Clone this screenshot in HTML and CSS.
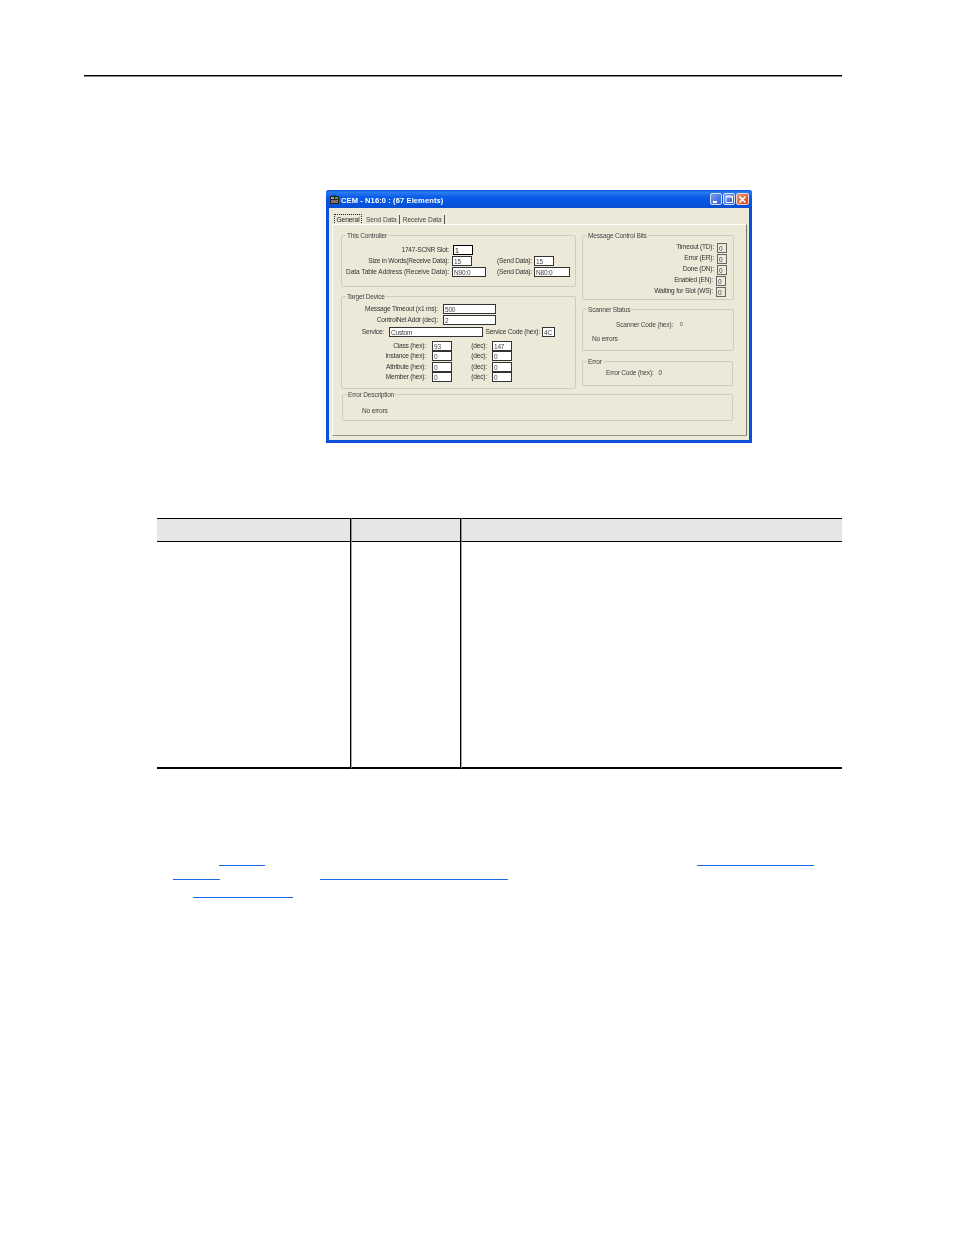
FILE: index.html
```html
<!DOCTYPE html>
<html lang="en">
<head>
<meta charset="utf-8">
<title>CEM - N16:0</title>
<link rel="stylesheet" href="styles.css">
</head>
<body>
<div class="rule"></div>

<section class="dialog">
  <header class="titlebar">
    <svg class="app-icon" viewBox="0 0 9 9" width="9" height="9"><rect x="0" y="1" width="9" height="8" fill="#262626"/><rect x="1" y="2" width="3" height="2" fill="#8fae98"/><rect x="5" y="2" width="3" height="2" fill="#4f9a62"/><rect x="1" y="5" width="7" height="3" fill="#8a6f60"/><rect x="3" y="0" width="3" height="1" fill="#3c3c3c"/></svg>
    <span class="title">CEM - N16:0 : (67 Elements)</span>
    <div class="win-buttons">
      <span class="win-btn"><svg viewBox="0 0 12 12" width="12" height="12"><rect x="3" y="8" width="4" height="2" fill="#fff"/></svg></span>
      <span class="win-btn"><svg viewBox="0 0 12 12" width="12" height="12"><path d="M3 3h6.500v6.500H3zM3 4h6.500" fill="none" stroke="#fff" stroke-width="1"/></svg></span>
      <span class="win-btn close"><svg viewBox="0 0 13 13" width="13" height="13"><path d="M3.500 3.500l6 6M9.500 3.500l-6 6" fill="none" stroke="#fff" stroke-width="1.700"/></svg></span>
    </div>
  </header>

  <div class="client">
    <nav class="tabs">
      <span class="tab active">General</span>
      <span class="tab send">Send Data</span>
      <span class="tab recv">Receive Data</span>
    </nav>
    <div class="panel">
      <div class="columns">
        <div class="col-left">
          <div class="group controller">
            <span class="legend">This Controller</span>
            <div class="row r11">
              <span class="lbl w107 slot">1747-SCNR Slot:</span><span class="box w20 strong">1</span>
            </div>
            <div class="row r11">
              <span class="lbl w107">Size in Words(Receive Data):</span><span class="box w20">15</span>
              <span class="lbl w37 ml23">(Send Data):</span><span class="box w20">15</span>
            </div>
            <div class="row r11">
              <span class="lbl w107 wide">Data Table Address (Receive Data):</span><span class="box w34">N90:0</span>
              <span class="lbl w37 ml9">(Send Data):</span><span class="box w36">N80:0</span>
            </div>
          </div>

          <div class="group target">
            <span class="legend">Target Device</span>
            <div class="row r11">
              <span class="lbl w96">Message Timeout (x1 ms):</span><span class="box w53 gap5">500</span>
            </div>
            <div class="row r12">
              <span class="lbl w96">ControlNet Addr (dec):</span><span class="box w53 gap5">2</span>
            </div>
            <div class="row r14">
              <span class="lbl w42">Service:</span><span class="box w94 gap5">Custom</span>
              <span class="lbl w55">Service Code (hex):</span><span class="box w13">4C</span>
            </div>
            <div class="row r10">
              <span class="lbl w84">Class (hex):</span><span class="box w20 gap6">93</span>
              <span class="lbl w35">(dec):</span><span class="box w20 gap5">147</span>
            </div>
            <div class="row r11">
              <span class="lbl w84">Instance (hex):</span><span class="box w20 gap6">0</span>
              <span class="lbl w35">(dec):</span><span class="box w20 gap5">0</span>
            </div>
            <div class="row r10">
              <span class="lbl w84">Attribute (hex):</span><span class="box w20 gap6">0</span>
              <span class="lbl w35">(dec):</span><span class="box w20 gap5">0</span>
            </div>
            <div class="row r10">
              <span class="lbl w84">Member (hex):</span><span class="box w20 gap6">0</span>
              <span class="lbl w35">(dec):</span><span class="box w20 gap5">0</span>
            </div>
          </div>
        </div>

        <div class="col-right">
          <div class="group bits">
            <span class="legend">Message Control Bits</span>
            <div class="row bit"><span class="lbl">Timeout (TD):</span><span class="box bitbox">0</span></div>
            <div class="row bit"><span class="lbl">Error (ER):</span><span class="box bitbox">0</span></div>
            <div class="row bit"><span class="lbl">Done (DN):</span><span class="box bitbox">0</span></div>
            <div class="row bit inset"><span class="lbl">Enabled (EN):</span><span class="box bitbox">0</span></div>
            <div class="row bit inset"><span class="lbl">Waiting for Slot (WS):</span><span class="box bitbox">0</span></div>
          </div>

          <div class="group scanner">
            <span class="legend">Scanner Status</span>
            <p class="line scan-code"><span>Scanner Code (hex):</span><span class="val-tiny">0</span></p>
            <p class="line scan-msg">No errors</p>
          </div>

          <div class="group error">
            <span class="legend">Error</span>
            <p class="line err-code"><span>Error Code (hex):</span><span class="val">0</span></p>
          </div>
        </div>
      </div>

      <div class="group description">
        <span class="legend">Error Description</span>
        <p class="line desc-msg">No errors</p>
      </div>
    </div>
  </div>
</section>

<table class="data">
  <thead><tr><th></th><th></th><th></th></tr></thead>
  <tbody><tr><td></td><td></td><td></td></tr></tbody>
</table>

<div class="links">
  <div class="link-row first"><a class="link l1"></a><a class="link l2"></a></div>
  <div class="link-row second"><a class="link l3"></a><a class="link l4"></a></div>
  <div class="link-row third"><a class="link l5"></a></div>
</div>
</body>
</html>
```

FILE: styles.css
```css
html, body { margin: 0; padding: 0; background: #fff; }
body { width: 954px; height: 1235px; overflow: hidden; font-family: "Liberation Sans", sans-serif; }

.rule { margin: 75px 0 0 84px; width: 758px; height: 1px; background: #000; box-shadow: 0 1px 0 rgba(0,0,0,.45); }

/* dialog window */
.dialog { box-sizing: border-box; margin: 114px 0 0 326px; width: 426px; height: 253px; background: #0b4fd8; border-radius: 3px 3px 0 0; padding: 0 3px 3px 3px; display: flex; flex-direction: column; filter: blur(.35px); font-size: 6.600px; letter-spacing: -.2px; color: #333; }
.titlebar { height: 18px; flex: none; margin: 0 -3px; padding: 1px 3px 0 4px; box-sizing: border-box; display: flex; align-items: center; border-radius: 3px 3px 0 0; background: linear-gradient(#0a57e0 0%, #2a7cf2 12%, #0a5ce8 40%, #0653dc 80%, #0a4fd0 100%); }
.app-icon { flex: none; }
.title { margin-left: 2px; margin-top: 1px; color: #fff; font-size: 7.500px; font-weight: bold; letter-spacing: .12px; }
.win-buttons { margin-left: auto; display: flex; gap: 1px; margin-top: -1px; }
.win-btn { box-sizing: border-box; width: 12px; height: 12px; border: 1px solid #d6e0f8; border-radius: 2px; background: linear-gradient(135deg, #7c9cf0, #2d5ddc); display: flex; overflow: hidden; }
.win-btn svg { margin: -1px; }
.win-btn.close { width: 13px; background: linear-gradient(135deg, #ee9a78, #d0401a); border-color: #f2d4c8; }

.client { flex: 1; background: #ece9d8; display: flex; flex-direction: column; padding: 6px 2px 4px 3px; min-height: 0; }
.tabs { display: flex; height: 11px; flex: none; padding-left: 2px; align-items: center; letter-spacing: -.05px; }
.tab { white-space: nowrap; line-height: 10px; color: #444; }
.tab.active { box-sizing: border-box; width: 28px; height: 11px; border: 1px dotted #222; text-align: center; line-height: 9px; color: #222; }
.tab.send { margin-left: 4px; padding-right: 2px; border-right: 1px solid #555; }
.tab.recv { margin-left: 3px; padding-right: 2px; border-right: 1px solid #555; }

.panel { flex: 1; box-sizing: border-box; margin-top: -1px; border: 1px solid; border-color: #fff #77776a #99998a #fff; padding: 10px 12px 0 8px; }
.columns { display: flex; gap: 6px; }
.col-left { width: 235px; display: flex; flex-direction: column; gap: 9px; }
.col-right { width: 152px; display: flex; flex-direction: column; }

.group { box-sizing: border-box; position: relative; border: 1px solid #cfcdbd; border-radius: 2px; }
.legend { position: absolute; top: -5px; left: 4px; padding: 0 1px; background: #ece9d8; line-height: 9px; white-space: nowrap; color: #444; }
.controller { height: 52px; padding-top: 9px; }
.target { height: 93px; padding-top: 7px; }
.bits { height: 65px; padding-top: 7px; }
.scanner { height: 42px; margin-top: 9px; }
.error { height: 25px; margin-top: 10px; width: 151px; }
.description { height: 27px; width: 391px; margin-top: 5px; margin-left: 1px; }

.row { display: flex; align-items: flex-start; white-space: nowrap; }
.r10 { height: 10px; }
.r11 { height: 11px; }
.r12 { height: 12px; }
.r14 { height: 14px; }
.lbl { text-align: right; flex: none; line-height: 9px; }
.wide { letter-spacing: -.05px; }
.box { box-sizing: border-box; height: 10px; flex: none; border: 1px solid #333; background: #fff; font-size: 6.500px; line-height: 9px; padding-left: 1px; color: #444; overflow: hidden; }
.box.strong { border-color: #000; color: #111; font-size: 7px; }
.w107 { width: 107px; margin-right: 3px; }
.slot { margin-right: 4px; }
.w37 { width: 37px; margin-right: 2px; }
.ml23 { margin-left: 23px; }
.ml9 { margin-left: 9px; }
.w20 { width: 20px; }
.w34 { width: 34px; }
.w36 { width: 36px; }
.w96 { width: 96px; }
.w53 { width: 53px; }
.gap5 { margin-left: 5px; }
.gap6 { margin-left: 6px; }
.w42 { width: 42px; }
.w94 { width: 94px; }
.w55 { width: 55px; margin-left: 2px; }
.w13 { width: 13px; margin-left: 2px; }
.w84 { width: 84px; }
.w35 { width: 35px; }

.bit { height: 11px; justify-content: flex-end; padding-right: 6px; }
.bit.inset { padding-right: 7px; }
.bit .lbl { margin-top: -1px; }
.bitbox { width: 10px; margin-left: 3px; border-color: #666; background: #ece9d8; }

.line { margin: 0; white-space: nowrap; line-height: 9px; color: #444; }
.scan-code { padding: 10px 0 0 33px; display: flex; }
.val-tiny { margin-left: 7px; font-size: 5px; }
.scan-msg { padding: 5px 0 0 9px; }
.err-code { padding: 6px 0 0 23px; display: flex; }
.val { margin-left: 5px; }
.desc-msg { padding: 11px 0 0 19px; }

/* table */
.data { margin: 75px 0 0 157px; width: 685px; table-layout: fixed; border-collapse: separate; border-spacing: 0; }
.data th, .data td { padding: 0; }
.data th:nth-child(1), .data td:nth-child(1) { width: 193px; border-right: 1px solid #000; }
.data th:nth-child(2), .data td:nth-child(2) { width: 108px; border-left: 1px solid rgba(0,0,0,.35); border-right: 1px solid #000; }
.data th:nth-child(3), .data td:nth-child(3) { border-left: 1px solid rgba(0,0,0,.35); }
.data th { height: 22px; background: #e6e6e6; border-top: 1px solid #000; border-bottom: 1px solid #000; }
.data td { height: 225px; border-bottom: 2px solid #000; }

/* links with hidden text */
.link-row { display: flex; height: 1px; }
.first { margin-top: 96px; }
.second { margin-top: 13px; }
.third { margin-top: 17px; }
.link { display: block; height: 1px; background: #1a6ae4; }
.l1 { margin-left: 219px; width: 46px; }
.l2 { margin-left: 432px; width: 117px; }
.l3 { margin-left: 173px; width: 47px; }
.l4 { margin-left: 100px; width: 188px; }
.l5 { margin-left: 193px; width: 100px; }
```
